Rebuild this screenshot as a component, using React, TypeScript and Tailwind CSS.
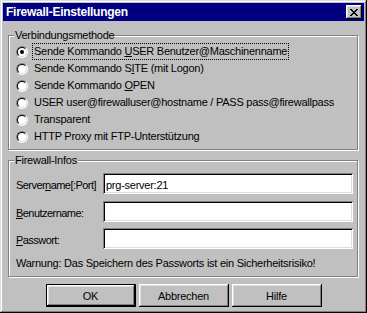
import React from "react";

const bevelOut =
  "shadow-[inset_-1px_-1px_#000,inset_1px_1px_#fff,inset_-2px_-2px_#808080,inset_2px_2px_#dfdfdf]";

function Radio({ checked }: { checked?: boolean }) {
  return (
    <div className="w-[12px] h-[12px] rounded-full border border-t-[#808080] border-l-[#808080] border-r-white border-b-white shrink-0">
      <div className="w-full h-full rounded-full bg-white border border-t-black border-l-black border-r-[#dfdfdf] border-b-[#dfdfdf] flex items-center justify-center">
        {checked && <div className="w-[4px] h-[4px] rounded-full bg-black" />}
      </div>
    </div>
  );
}

function RadioRow({ children, checked, focus }: { children: React.ReactNode; checked?: boolean; focus?: boolean }) {
  return (
    <div className="h-[17px] flex items-center">
      <Radio checked={checked} />
      <span
        className={
          "ml-[4px] block h-[17px] leading-[15px] whitespace-nowrap px-[1px] border border-dotted " +
          (focus ? "border-black" : "border-transparent")
        }
      >
        {children}
      </span>
    </div>
  );
}

function Field({ label, value }: { label: React.ReactNode; value?: string }) {
  return (
    <div className="h-[21px] flex items-center">
      <div className="w-[87px] shrink-0 pt-[3px] whitespace-nowrap tracking-[-0.55px]">{label}</div>
      <div className="w-[250px] h-[21px] bg-white shadow-[inset_1px_1px_#808080,inset_-1px_-1px_#fff,inset_2px_2px_#000,inset_-2px_-2px_#dfdfdf] flex items-center pl-[3px] pt-[3px]">
        {value}
      </div>
    </div>
  );
}

function Btn({ children, def }: { children: React.ReactNode; def?: boolean }) {
  if (def) {
    return (
      <div className="w-[90px] h-[23px] border border-black">
        <div className={"w-full h-full flex items-center justify-center pt-[1px] " + bevelOut}>{children}</div>
      </div>
    );
  }
  return <div className={"w-[90px] h-[23px] flex items-center justify-center pt-[1px] " + bevelOut}>{children}</div>;
}

export default function App() {
  return (
    <div
      className={
        "w-[367px] h-[313px] bg-[#c0c0c0] p-[3px] text-black text-[11px] tracking-[-0.25px] leading-[13px] font-['Liberation_Sans',Arial,sans-serif] shadow-[inset_-1px_-1px_#000,inset_1px_1px_#dfdfdf,inset_-2px_-2px_#808080,inset_2px_2px_#fff]"
      }
    >
      {/* Title bar */}
      <div className="h-[18px] bg-[#000080] flex items-center justify-between pl-[3px] pr-[2px]">
        <span className="text-white font-bold text-[12px] leading-[18px]">Firewall-Einstellungen</span>
        <div className={"w-[16px] h-[14px] bg-[#c0c0c0] flex items-center justify-center " + bevelOut}>
          <svg width="8" height="7" viewBox="0 0 8 7" shapeRendering="crispEdges" className="block">
            <path
              d="M0 0h2v1h-2zM6 0h2v1h-2zM1 1h2v1h-2zM5 1h2v1h-2zM2 2h4v1h-4zM3 3h2v1h-2zM2 4h4v1h-4zM1 5h2v1h-2zM5 5h2v1h-2zM0 6h2v1h-2zM6 6h2v1h-2z"
              fill="#000"
            />
          </svg>
        </div>
      </div>

      {/* Group 1 */}
      <div className="relative mt-[14px] ml-[5px] w-[350px] h-[115px] border border-[#808080] shadow-[1px_1px_0_#fff,inset_1px_1px_0_#fff] pt-[7px] pl-[7px]">
        <div className="absolute top-[-7px] left-[5px] bg-[#c0c0c0] px-[1px] leading-[13px]">Verbindungsmethode</div>
        <RadioRow checked focus>
          Sende Kommando <u>U</u>SER Benutzer@Maschinenname
        </RadioRow>
        <RadioRow>
          Sende Kommando S<u>I</u>TE (mit Logon)
        </RadioRow>
        <RadioRow>
          Sende Kommando <u>O</u>PEN
        </RadioRow>
        <RadioRow>USER user@firewalluser@hostname / PASS pass@firewallpass</RadioRow>
        <RadioRow>Transparent</RadioRow>
        <RadioRow>HTTP Proxy mit FTP-Unterstützung</RadioRow>
      </div>

      {/* Group 2 */}
      <div className="relative mt-[10px] ml-[5px] w-[350px] h-[117px] border border-[#808080] shadow-[1px_1px_0_#fff,inset_1px_1px_0_#fff] pt-[12px] pl-[7px]">
        <div className="absolute top-[-7px] left-[5px] bg-[#c0c0c0] px-[1px] leading-[13px]">Firewall-Infos</div>
        <Field
          label={
            <>
              Server<u>n</u>ame[:Port]
            </>
          }
          value="prg-server:21"
        />
        <div className="mt-[7px]">
          <Field
            label={
              <>
                <u>B</u>enutzername:
              </>
            }
          />
        </div>
        <div className="mt-[6px]">
          <Field
            label={
              <>
                <u>P</u>asswort:
              </>
            }
          />
        </div>
        <div className="mt-[7px] h-[13px] pt-[1px]">Warnung: Das Speichern des Passworts ist ein Sicherheitsrisiko!</div>
      </div>

      {/* Buttons */}
      <div className="mt-[7px] flex justify-center gap-[3px]">
        <Btn def>OK</Btn>
        <Btn>Abbrechen</Btn>
        <Btn>Hilfe</Btn>
      </div>
    </div>
  );
}
